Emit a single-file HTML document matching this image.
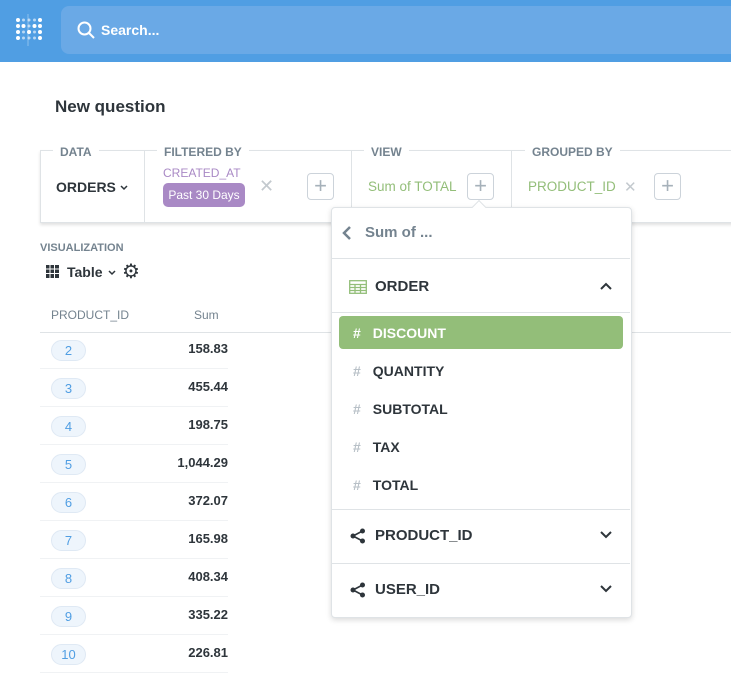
<!DOCTYPE html>
<html><head><style>
*{box-sizing:border-box;margin:0;padding:0}
body{width:731px;height:657px;overflow:hidden;background:#fff;font-family:"Liberation Sans",sans-serif;position:relative;color:#2e353b}
.a{position:absolute}
.hdr{left:0;top:0;width:731px;height:62px;background:#509ee3}
.search{left:61px;top:6px;width:680px;height:48px;background:#6aa9e6;border-radius:8px}
.lbl{font-size:12px;color:#74838f;font-weight:bold;background:#fff;padding:0 7px}
.plus{width:27px;height:27px;border:1px solid #ccd3da;border-radius:4px;color:#a6b1ba;font-size:22px;line-height:24px;text-align:center;background:#fff}
.row{left:40px;width:188px;height:38px;border-bottom:1px solid #f0f2f4}
.pill{position:absolute;left:11px;top:9px;width:35px;height:21px;border:1px solid #dfe9f4;background:#eef5fc;border-radius:11px;color:#509ee3;font-size:13px;text-align:center;line-height:19px}
.val{position:absolute;right:0;top:10px;font-size:13px;font-weight:bold;color:#2e353b}
.it{left:351px;font-size:14px;font-weight:bold;color:#2e353b}
.it b{color:#b8c0c7;margin-right:12px;font-weight:bold}
.dv{left:332px;width:298px;height:1px;background:#dfe3e6}
</style></head><body>
<div class="a hdr"></div>
<svg class="a" style="left:16px;top:14px" width="26" height="32" viewBox="0 0 26 32" fill="#fff">
<path d="M12 0v32" stroke="#fff" stroke-opacity=".35" stroke-width="1"/>
<circle cx="2" cy="6" r="2"/><circle cx="2" cy="12" r="2"/><circle cx="2" cy="18" r="2"/><circle cx="2" cy="24" r="2"/>
<circle cx="7.5" cy="6" r="1.5" opacity=".6"/><circle cx="7.5" cy="12" r="2"/><circle cx="7.5" cy="18" r="1.5" opacity=".6"/><circle cx="7.5" cy="24" r="1.5" opacity=".6"/>
<circle cx="13" cy="6" r="1.5" opacity=".6"/><circle cx="13" cy="12" r="1.5" opacity=".6"/><circle cx="13" cy="18" r="2"/><circle cx="13" cy="24" r="1.5" opacity=".6"/>
<circle cx="18.5" cy="6" r="1.5" opacity=".6"/><circle cx="18.5" cy="12" r="2"/><circle cx="18.5" cy="18" r="1.5" opacity=".6"/><circle cx="18.5" cy="24" r="1.5" opacity=".6"/>
<circle cx="24" cy="6" r="2"/><circle cx="24" cy="12" r="2"/><circle cx="24" cy="18" r="2"/><circle cx="24" cy="24" r="2"/></svg>
<div class="a search"></div>
<svg class="a" style="left:77px;top:21px" width="18" height="18" viewBox="0 0 18 18" fill="none" stroke="#fff" stroke-width="2"><circle cx="7.5" cy="7.5" r="6"/><path d="M12 12l5 5"/></svg>
<div class="a" style="left:101px;top:22px;color:#fff;font-size:14px;font-weight:bold">Search...</div>

<div class="a" style="left:55px;top:97px;font-size:17px;font-weight:bold;color:#2e353b">New question</div>

<div class="a" style="left:40px;top:150px;width:700px;height:73px;border:1px solid #dfe3e6;box-shadow:0 2px 3px rgba(0,0,0,.12)"></div>
<div class="a" style="left:144px;top:150px;width:1px;height:73px;background:#dfe3e6"></div>
<div class="a" style="left:351px;top:150px;width:1px;height:73px;background:#dfe3e6"></div>
<div class="a" style="left:511px;top:150px;width:1px;height:73px;background:#dfe3e6"></div>
<div class="a lbl" style="left:53px;top:145px">DATA</div>
<div class="a lbl" style="left:157px;top:145px">FILTERED BY</div>
<div class="a lbl" style="left:364px;top:145px">VIEW</div>
<div class="a lbl" style="left:525px;top:145px">GROUPED BY</div>
<div class="a" style="left:56px;top:179px;font-size:14px;font-weight:bold">ORDERS</div>
<svg class="a" style="left:120px;top:185px" width="8" height="6" viewBox="0 0 8 6" fill="none" stroke="#2e353b" stroke-width="1.5"><path d="M1 1l3 3 3-3"/></svg>
<div class="a" style="left:163px;top:166px;font-size:12px;color:#a989c5">CREATED_AT</div>
<div class="a" style="left:163px;top:183px;width:82px;height:24px;background:#a989c5;border-radius:5px;color:#fff;font-size:12px;line-height:24px;text-align:center">Past 30 Days</div>
<div class="a" style="left:259px;top:176px;color:#c3c9ce;font-size:18px">&#10005;</div>
<div class="a plus" style="left:307px;top:173px">+</div>
<div class="a" style="left:368px;top:179px;font-size:13.5px;color:#93be79">Sum of TOTAL</div>
<div class="a plus" style="left:467px;top:173px">+</div>
<div class="a" style="left:528px;top:179px;font-size:13.5px;color:#93be79">PRODUCT_ID</div>
<div class="a" style="left:624px;top:178px;color:#c3c9ce;font-size:15px">&#10005;</div>
<div class="a plus" style="left:654px;top:173px">+</div>

<div class="a" style="left:40px;top:242px;font-size:11px;font-weight:bold;color:#74838f">VISUALIZATION</div>
<svg class="a" style="left:46px;top:265px" width="13" height="13" viewBox="0 0 13 13" fill="#2e353b"><path d="M0 0h13v13H0z"/><path d="M0 4h13M0 8.5h13M4 0v13M8.5 0v13" stroke="#fff" stroke-width="1"/></svg>
<div class="a" style="left:67px;top:264px;font-size:14px;font-weight:bold">Table</div>
<svg class="a" style="left:108px;top:270px" width="8" height="6" viewBox="0 0 8 6" fill="none" stroke="#2e353b" stroke-width="1.5"><path d="M1 1l3 3 3-3"/></svg>
<div class="a" style="left:122px;top:259px;font-size:20px;color:#2e353b">&#9881;</div>
<div class="a" style="left:51px;top:308px;font-size:12px;color:#74838f">PRODUCT_ID</div>
<div class="a" style="left:194px;top:308px;font-size:12px;color:#74838f">Sum</div>
<div class="a" style="left:40px;top:332px;width:691px;height:1px;background:#dfe3e6"></div>
<div class="a row" style="top:331px"><div class="pill">2</div><div class="val">158.83</div></div>
<div class="a row" style="top:369px"><div class="pill">3</div><div class="val">455.44</div></div>
<div class="a row" style="top:407px"><div class="pill">4</div><div class="val">198.75</div></div>
<div class="a row" style="top:445px"><div class="pill">5</div><div class="val">1,044.29</div></div>
<div class="a row" style="top:483px"><div class="pill">6</div><div class="val">372.07</div></div>
<div class="a row" style="top:521px"><div class="pill">7</div><div class="val">165.98</div></div>
<div class="a row" style="top:559px"><div class="pill">8</div><div class="val">408.34</div></div>
<div class="a row" style="top:597px"><div class="pill">9</div><div class="val">335.22</div></div>
<div class="a row" style="top:635px"><div class="pill">10</div><div class="val">226.81</div></div>

<div class="a" style="left:331px;top:207px;width:301px;height:411px;background:#fff;border:1px solid #dfe3e6;border-radius:4px;box-shadow:0 2px 6px rgba(0,0,0,.15)"></div>
<div class="a" style="left:474px;top:202px;width:10px;height:10px;background:#fff;border-left:1px solid #dfe3e6;border-top:1px solid #dfe3e6;transform:rotate(45deg)"></div>
<svg class="a" style="left:342px;top:225px" width="10" height="16" viewBox="0 0 10 16" fill="none" stroke="#74838f" stroke-width="2.5"><path d="M8 2L2 8l6 6"/></svg>
<div class="a" style="left:365px;top:224px;font-size:15px;font-weight:bold;color:#74838f">Sum of ...</div>
<div class="a dv" style="top:258px"></div>
<svg class="a" style="left:349px;top:280px" width="18" height="14" viewBox="0 0 18 14" fill="none" stroke="#93be79" stroke-width="1.3"><rect x=".7" y=".7" width="16.6" height="12.6"/><path d="M.7 4.5h16.6M.7 7.5h16.6M.7 10.5h16.6M6 4.5v9M11.5 4.5v9"/></svg>
<div class="a" style="left:375px;top:278px;font-size:15px;font-weight:bold">ORDER</div>
<svg class="a" style="left:600px;top:282px" width="12" height="8" viewBox="0 0 12 8" fill="none" stroke="#2e353b" stroke-width="2"><path d="M1 7l5-5 5 5"/></svg>
<div class="a dv" style="top:312px"></div>
<div class="a" style="left:339px;top:316px;width:284px;height:33px;background:#93be79;border-radius:4px"></div>
<div class="a it" style="top:325px;color:#fff;left:353px"><b style="color:#fff">#</b>DISCOUNT</div>
<div class="a it" style="top:363px;left:353px"><b>#</b>QUANTITY</div>
<div class="a it" style="top:401px;left:353px"><b>#</b>SUBTOTAL</div>
<div class="a it" style="top:439px;left:353px"><b>#</b>TAX</div>
<div class="a it" style="top:477px;left:353px"><b>#</b>TOTAL</div>
<div class="a dv" style="top:509px"></div>
<svg class="a" style="left:350px;top:528px" width="16" height="16" viewBox="0 0 16 16" fill="#2e353b"><circle cx="12.5" cy="3" r="2.5"/><circle cx="3" cy="8" r="2.5"/><circle cx="12.5" cy="13" r="2.5"/><path d="M12.5 3L3 8l9.5 5" stroke="#2e353b" stroke-width="1.6" fill="none"/></svg>
<div class="a" style="left:375px;top:527px;font-size:15px;font-weight:bold">PRODUCT_ID</div>
<svg class="a" style="left:600px;top:531px" width="12" height="8" viewBox="0 0 12 8" fill="none" stroke="#2e353b" stroke-width="2"><path d="M1 1l5 5 5-5"/></svg>
<div class="a dv" style="top:563px"></div>
<svg class="a" style="left:350px;top:582px" width="16" height="16" viewBox="0 0 16 16" fill="#2e353b"><circle cx="12.5" cy="3" r="2.5"/><circle cx="3" cy="8" r="2.5"/><circle cx="12.5" cy="13" r="2.5"/><path d="M12.5 3L3 8l9.5 5" stroke="#2e353b" stroke-width="1.6" fill="none"/></svg>
<div class="a" style="left:375px;top:581px;font-size:15px;font-weight:bold">USER_ID</div>
<svg class="a" style="left:600px;top:585px" width="12" height="8" viewBox="0 0 12 8" fill="none" stroke="#2e353b" stroke-width="2"><path d="M1 1l5 5 5-5"/></svg>
</body></html>
